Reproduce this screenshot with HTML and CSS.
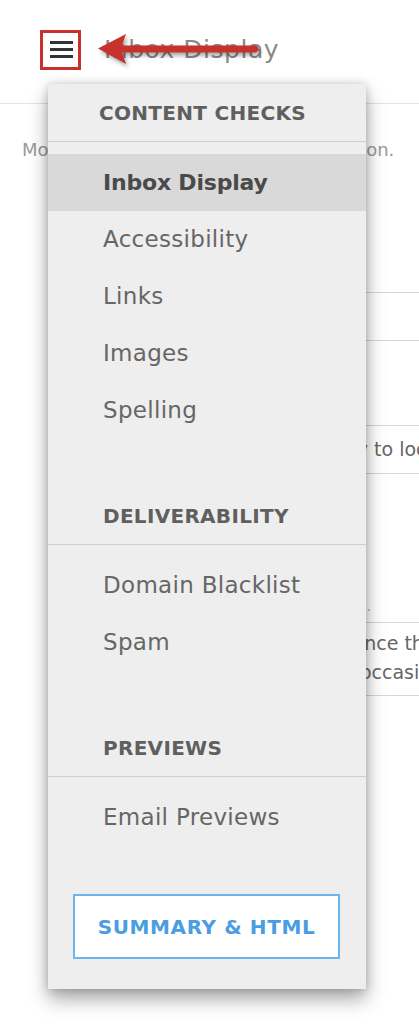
FILE: index.html
```html
<!DOCTYPE html>
<html lang="en">
<head>
    <meta charset="UTF-8">
    <meta name="viewport" content="width=device-width, initial-scale=1.0">
    <title>Inbox Display</title>
    <link rel="stylesheet" href="styles.css">
</head>
<body>
    <header class="topbar">
        <button class="menu-toggle" aria-label="Menu">
            <span></span><span></span><span></span>
        </button>
        <h1 class="page-title">Inbox Display</h1>
        <!-- annotation arrow pointing at the menu button -->
        <svg class="note-arrow" width="180" height="50" viewBox="90 24 180 50">
            <path d="M98 48.5 L126 34 L122 45.5 L256 45.5 Q261 49 256 52.5 L122 52.5 L126 64 Z" fill="#c8322c"/>
        </svg>
    </header>

    <main class="content">
        <p class="intro">Monitor how email looks in inbox section.</p>
        <div class="field"></div>
        <div class="field field-text">Your subject lines should be easy to look at</div>
        <p class="hint">Shown in the inbox view below the subject you.</p>
        <div class="field field-area">Preheader text appears after. Since the<br>so that readers see it on every occasion</div>
    </main>

    <nav class="drawer">
        <section class="drawer-section">
            <h2 class="drawer-heading">Content Checks</h2>
            <ul class="drawer-list">
                <li class="active">Inbox Display</li>
                <li>Accessibility</li>
                <li>Links</li>
                <li>Images</li>
                <li>Spelling</li>
            </ul>
        </section>
        <section class="drawer-section">
            <h2 class="drawer-heading">Deliverability</h2>
            <ul class="drawer-list">
                <li>Domain Blacklist</li>
                <li>Spam</li>
            </ul>
        </section>
        <section class="drawer-section">
            <h2 class="drawer-heading">Previews</h2>
            <ul class="drawer-list">
                <li>Email Previews</li>
            </ul>
        </section>
        <div class="drawer-footer">
            <button class="summary-btn">Summary &amp; HTML</button>
        </div>
    </nav>
</body>
</html>
```

FILE: styles.css
```css
* {
    box-sizing: border-box;
}

body {
    margin: 0;
    font-family: "DejaVu Sans", sans-serif;
    background-color: #fff;
    color: #666;
    overflow-x: hidden;
    position: relative;
    min-height: 1024px;
}

.topbar {
    position: relative;
    display: flex;
    align-items: center;
    height: 104px;
    padding: 0 0 4px 40px;
    border-bottom: 1px solid #e4e4e4;
}

.menu-toggle {
    display: flex;
    flex-direction: column;
    justify-content: center;
    gap: 4px;
    width: 41px;
    height: 40px;
    padding: 0 0 0 7px;
    border: 3px solid #c7302b;
    background-color: #fff;
}

.menu-toggle span {
    display: block;
    width: 23px;
    height: 3px;
    background-color: #333;
}

.page-title {
    margin: 0 0 0 23px;
    font-size: 25px;
    font-weight: normal;
    color: #8a8a8a;
    letter-spacing: 0.5px;
}

.note-arrow {
    position: absolute;
    left: 90px;
    top: 24px;
    filter: drop-shadow(2px 3px 2px rgba(0, 0, 0, 0.35));
}

.content {
    padding-left: 22px;
    overflow: hidden;
}

.intro {
    margin: 32px 0 0;
    font-size: 18px;
    line-height: 28px;
    color: #9a9a9a;
    white-space: nowrap;
}

.field {
    width: 440px;
    height: 49px;
    margin: 128px 0 0 30px;
    border: 1px solid #d6d6d6;
}

.field-text {
    margin-top: 84px;
    padding-left: 0;
    font-size: 19px;
    line-height: 47px;
    color: #666;
    white-space: nowrap;
}

.hint {
    margin: 123px 0 0 30px;
    font-size: 13.4px;
    line-height: 20px;
    color: #aaa;
    white-space: nowrap;
}

.field-area {
    height: 74px;
    margin-top: 5px;
    padding: 6px 0 0 9px;
    font-size: 19px;
    line-height: 29px;
    color: #666;
    white-space: nowrap;
}

.drawer {
    position: absolute;
    left: 48px;
    top: 84px;
    width: 318px;
    background-color: #eeeeee;
    box-shadow: 0 10px 18px rgba(0, 0, 0, 0.35), 0 0 8px rgba(0, 0, 0, 0.18);
}

.drawer-heading {
    display: flex;
    align-items: center;
    height: 58px;
    margin: 0;
    padding-left: 55px;
    border-bottom: 1px solid #cfcfcf;
    font-size: 20px;
    font-weight: bold;
    text-transform: uppercase;
    color: #5f5f5f;
    letter-spacing: 0.3px;
}

.drawer-section:first-child .drawer-heading {
    padding-left: 51px;
}

.drawer-list {
    list-style: none;
    margin: 0;
    padding: 12px 0 48px;
}

.drawer-list li {
    height: 57px;
    padding-left: 55px;
    font-size: 23px;
    line-height: 57px;
    color: #666;
    letter-spacing: 0.3px;
}

.drawer-list li.active {
    background-color: #d9d9d9;
    font-weight: bold;
    font-size: 22px;
    color: #4a4a4a;
    letter-spacing: -0.2px;
}

.drawer-footer {
    padding: 0 26px 30px 25px;
}

.summary-btn {
    display: block;
    width: 100%;
    height: 65px;
    border: 2px solid #6cb6f0;
    background-color: #fff;
    font-family: "DejaVu Sans", sans-serif;
    font-size: 20px;
    font-weight: bold;
    text-transform: uppercase;
    color: #4a9de2;
    letter-spacing: 0.6px;
}
```
